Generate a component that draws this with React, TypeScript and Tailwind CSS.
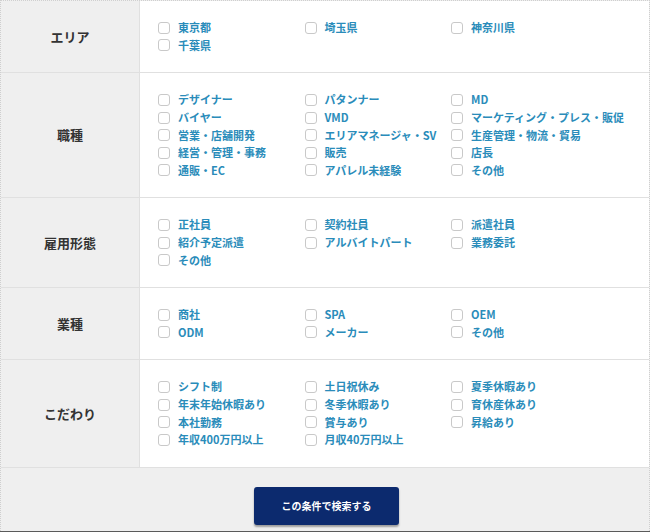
import React from "react";

const font = { fontFamily: '"Noto Sans CJK JP", "Noto Sans", sans-serif' };

type Row = { label: string; items: string[] };

const rows: Row[] = [
  { label: "エリア", items: ["東京都", "埼玉県", "神奈川県", "千葉県"] },
  {
    label: "職種",
    items: [
      "デザイナー",
      "パタンナー",
      "MD",
      "バイヤー",
      "VMD",
      "マーケティング・プレス・販促",
      "営業・店舗開発",
      "エリアマネージャ・SV",
      "生産管理・物流・貿易",
      "経営・管理・事務",
      "販売",
      "店長",
      "通販・EC",
      "アパレル未経験",
      "その他",
    ],
  },
  {
    label: "雇用形態",
    items: ["正社員", "契約社員", "派遣社員", "紹介予定派遣", "アルバイトパート", "業務委託", "その他"],
  },
  { label: "業種", items: ["商社", "SPA", "OEM", "ODM", "メーカー", "その他"] },
  {
    label: "こだわり",
    items: [
      "シフト制",
      "土日祝休み",
      "夏季休暇あり",
      "年末年始休暇あり",
      "冬季休暇あり",
      "育休産休あり",
      "本社勤務",
      "賞与あり",
      "昇給あり",
      "年収400万円以上",
      "月収40万円以上",
    ],
  },
];

function Item({ text }: { text: string }) {
  return (
    <label className="flex items-center h-[17.6px] whitespace-nowrap">
      <span className="w-[12px] h-[12px] shrink-0 rounded-[3px] border border-[#c9c9c9] bg-white" />
      <span className="ml-[8px] text-[11px] font-bold text-[#2a8cba] leading-[17px]">{text}</span>
    </label>
  );
}

export default function App() {
  return (
    <div className="w-[650px] h-[532px] overflow-hidden bg-[#efefef]" style={font}>
      <div className="border-t border-l border-r border-dotted border-[#cfcfcf]">
        {rows.map((r) => (
          <div key={r.label} className="flex border-b border-[#e0e0e0]">
            <div className="w-[139px] shrink-0 bg-[#efefef] border-r border-[#e0e0e0] flex items-center justify-center">
              <span className="text-[13px] font-bold text-[#333]">{r.label}</span>
            </div>
            <div className="flex-1 bg-white pl-[18px] py-[18px]">
              <div className="grid grid-cols-[146.5px_146.5px_146.5px] auto-rows-[17.6px]">
                {r.items.map((t, i) => (
                  <Item key={i} text={t} />
                ))}
              </div>
            </div>
          </div>
        ))}
        <div className="h-[63px] bg-[#efefef] flex justify-center pt-[19px]">
          <button className="w-[145px] h-[38px] ml-[3px] rounded-[3px] bg-[#0c2a6e] text-white text-[10px] font-bold shadow-[0_2px_2px_rgba(0,0,0,0.35)]">
            この条件で検索する
          </button>
        </div>
      </div>
      <div className="h-[3px] bg-[#5a5a5a]" />
    </div>
  );
}
